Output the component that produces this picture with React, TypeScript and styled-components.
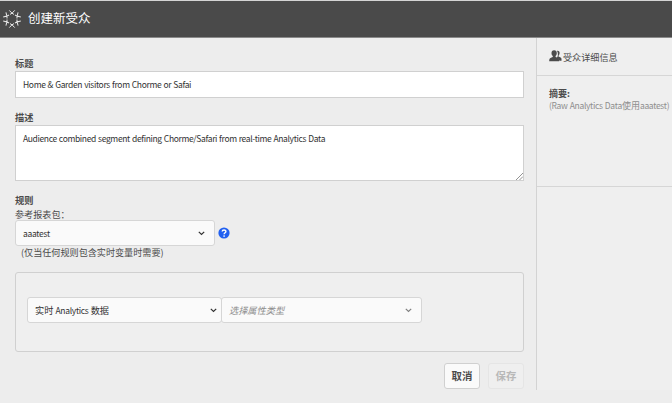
import React from "react";
import styled, { createGlobalStyle } from "styled-components";

const GlobalStyle = createGlobalStyle`
  * { box-sizing: border-box; }
  body {
    margin: 0;
    background: #ededed;
    font-family: "Noto Sans CJK SC", "Noto Sans", sans-serif;
    font-size: 9px;
    color: #4b4b4b;
    overflow: hidden;
  }
`;

const Page = styled.div`
  height: 403px;
  width: 672px;
  display: flex;
  flex-direction: column;
  border-top: 1px solid #d4d4d4;
`;

const Header = styled.header`
  height: 37px;
  flex: none;
  display: flex;
  align-items: center;
  gap: 7px;
  padding: 0 0 1px 3px;
  background: #4a4a4a;
  border-bottom: 1px solid #8a8a8a;
`;

const PageTitle = styled.h1`
  margin: 0 0 1px;
  font-size: 12.5px;
  line-height: 18px;
  font-weight: 400;
  color: #fff;
`;

const Body = styled.div`
  display: flex;
  height: 352px;
`;

const Form = styled.main`
  width: 536px;
  padding: 17px 12px 0 15px;
  display: flex;
  flex-direction: column;
`;

const Label = styled.label`
  height: 16px;
  line-height: 16px;
  font-size: 9.2px;
  font-weight: 700;
  color: #4b4b4b;
`;

const TextInput = styled.input`
  height: 27px;
  width: 509px;
  margin: 0 0 11px;
  padding: 0 7px 2px;
  border: 1px solid #d0d0d0;
  background: #fff;
  color: #323232;
  font: inherit;
  font-size: 8.5px;
  letter-spacing: -0.34px;
  word-spacing: 0.5px;
  outline: none;
`;

const AreaWrap = styled.div`
  position: relative;
  height: 67px;
`;

const TextArea = styled.textarea`
  display: block;
  height: 56px;
  width: 509px;
  padding: 5px 7px;
  border: 1px solid #d0d0d0;
  background: #fff;
  color: #323232;
  font: inherit;
  font-size: 8.5px;
  letter-spacing: -0.35px;
  word-spacing: 0.5px;
  line-height: 14px;
  outline: none;
  resize: none;
`;

const Grip = styled.svg`
  position: absolute;
  left: 501px;
  top: 48px;
`;

const Hint = styled.div<{ $indent?: number }>`
  height: 12px;
  line-height: 12px;
  font-size: 9.1px;
  padding-left: ${(p) => p.$indent ?? 0}px;
  white-space: nowrap;
`;

const SelectLine = styled.div`
  display: flex;
  align-items: center;
  gap: 3px;
`;

const Select = styled.button<{ $width: number; $muted?: boolean; $arrow: number }>`
  width: ${(p) => p.$width}px;
  height: 26px;
  display: flex;
  align-items: center;
  justify-content: space-between;
  padding: 0 ${(p) => p.$arrow}px 1px 7px;
  border: 1px solid #d6d6d6;
  border-radius: 3px;
  background: #fafafa;
  font: inherit;
  font-size: 9.2px;
  line-height: 14px;
  color: ${(p) => (p.$muted ? "#8e8e8e" : "#323232")};
  font-style: ${(p) => (p.$muted ? "italic" : "normal")};
  & + & { margin-left: -1px; }
  & > svg { margin-top: 2px; }
`;

const Latin = styled.span`
  font-size: 8.5px;
  letter-spacing: -0.31px;
  word-spacing: 0.5px;
`;

const RulePanel = styled.section`
  width: 509px;
  height: 80px;
  margin-top: 14px;
  padding: 24px 0 0 11px;
  display: flex;
  align-items: flex-start;
  background: #efefef;
  border: 1px solid #d0d0d0;
  border-radius: 3px;
`;

const Actions = styled.div`
  display: flex;
  justify-content: flex-end;
  gap: 8px;
  margin-top: 11px;
`;

const Button = styled.button`
  width: 36px;
  height: 26px;
  padding: 0 0 1px;
  border: 1px solid #d0d0d0;
  border-radius: 3px;
  background: #fafafa;
  color: #4b4b4b;
  font: inherit;
  font-size: 10.4px;
  font-weight: 700;
  line-height: 16px;
  &:disabled {
    background: #efefef;
    border-color: #e5e5e5;
    color: #b8b8b8;
  }
`;

const Sidebar = styled.aside`
  flex: 1;
  min-width: 0;
  background: #efefef;
  border-left: 1px solid #d3d3d3;
`;

const SidebarHead = styled.div`
  height: 38px;
  display: flex;
  align-items: center;
  gap: 1px;
  padding: 0 0 1px 12px;
  line-height: 12px;
  border-bottom: 1px solid #d6d6d6;
`;

const SidebarTitle = styled.span`
  padding-top: 1px;
  font-size: 9.1px;
`;

const Summary = styled.div`
  height: 111px;
  padding: 12px 0 0 12px;
  border-bottom: 1px solid #d6d6d6;
  white-space: nowrap;
`;

const SummaryTitle = styled.div`
  line-height: 12px;
  font-weight: 700;
`;

const SummaryText = styled.div`
  line-height: 11px;
  color: #8e8e8e;
`;

const Chevron = ({ color = "#323232" }: { color?: string }) => (
  <svg width="7" height="5" viewBox="0 0 7 5" fill="none">
    <path d="M.8.8 3.5 3.5 6.2.8" stroke={color} strokeWidth="1.2" />
  </svg>
);

const BrandMark = () => (
  <svg width="18" height="19" viewBox="0 0 18 19" fill="none" stroke="#e8e8e8" strokeWidth="1">
    {[0, 60, 120, 180, 240, 300].map((angle) => (
      <g key={angle} transform={`rotate(${angle} 9 10)`}>
        <path d="M6.300 1.400 9 4.200 11.700 1.400M9 4.200 7 5.400M9 4.200l2 1.200" />
      </g>
    ))}
  </svg>
);

const People = () => (
  <svg width="13" height="12" viewBox="0 0 13 12" fill="#4b4b4b">
    <path d="M8 .9c1.8-.4 2.8.8 2.6 2.4-.1 1.1-.6 1.9-1.1 2.4v.9c1.5.5 3 1 3 2.5v1.700h-2.1c-.3-1.5-1.4-2.1-2.8-2.7.9-1.1 1.4-2.3 1.3-3.9C8.800 2.600 8.600 1.700 8 .9z" />
    <path d="M5.100.2c1.800 0 2.800 1.300 2.700 3-.1 1.300-.6 2.200-1.200 2.800v.9c1.700.6 3.400 1.200 3.500 2.900l.1 1.400H.2l.1-1.400C.4 8.100 2.100 7.500 3.800 6.900V6c-.7-.6-1.300-1.500-1.300-2.800C2.400 1.500 3.400.2 5.100.2z" />
  </svg>
);

const HelpMark = () => (
  <svg width="12" height="12" viewBox="0 0 12 12">
    <circle cx="6" cy="6" r="5.600" fill="#2160f0" />
    <path d="M4.200 4.600c0-2.200 3.700-2.200 3.700-.1 0 1.200-1.800 1.300-1.800 2.700" fill="none" stroke="#fff" strokeWidth="1.400" />
    <circle cx="6.100" cy="9" r=".85" fill="#fff" />
  </svg>
);

export default function App() {
  return (
    <>
      <GlobalStyle />
      <Page>
        <Header>
          <BrandMark />
          <PageTitle>创建新受众</PageTitle>
        </Header>
        <Body>
          <Form>
            <Label htmlFor="title">标题</Label>
            <TextInput id="title" defaultValue="Home & Garden visitors from Chorme or Safai" />
            <Label htmlFor="description">描述</Label>
            <AreaWrap>
              <TextArea
                id="description"
                defaultValue="Audience combined segment defining Chorme/Safari from real-time Analytics Data"
              />
              <Grip width="7" height="7" viewBox="0 0 7 7" stroke="#777" strokeWidth=".8">
                <path d="M0 7 7 0M3.500 7 7 3.500" />
              </Grip>
            </AreaWrap>
            <Label as="div">规则</Label>
            <Hint>参考报表包：</Hint>
            <SelectLine>
              <Select $width={200} $arrow={9}>
                <Latin>aaatest</Latin>
                <Chevron />
              </Select>
              <HelpMark />
            </SelectLine>
            <Hint $indent={6}>(仅当任何规则包含实时变量时需要)</Hint>
            <RulePanel>
              <Select $width={195} $arrow={4}>
                <span>
                  实时<Latin> Analytics </Latin>数据
                </span>
                <Chevron />
              </Select>
              <Select $width={201} $arrow={9} $muted>
                选择属性类型
                <Chevron color="#808080" />
              </Select>
            </RulePanel>
            <Actions>
              <Button>取消</Button>
              <Button disabled>保存</Button>
            </Actions>
          </Form>
          <Sidebar>
            <SidebarHead>
              <People />
              <SidebarTitle>受众详细信息</SidebarTitle>
            </SidebarHead>
            <Summary>
              <SummaryTitle>摘要:</SummaryTitle>
              <SummaryText>
                <Latin>(Raw Analytics Data</Latin>使用<Latin>aaatest)</Latin>
              </SummaryText>
            </Summary>
          </Sidebar>
        </Body>
      </Page>
    </>
  );
}
